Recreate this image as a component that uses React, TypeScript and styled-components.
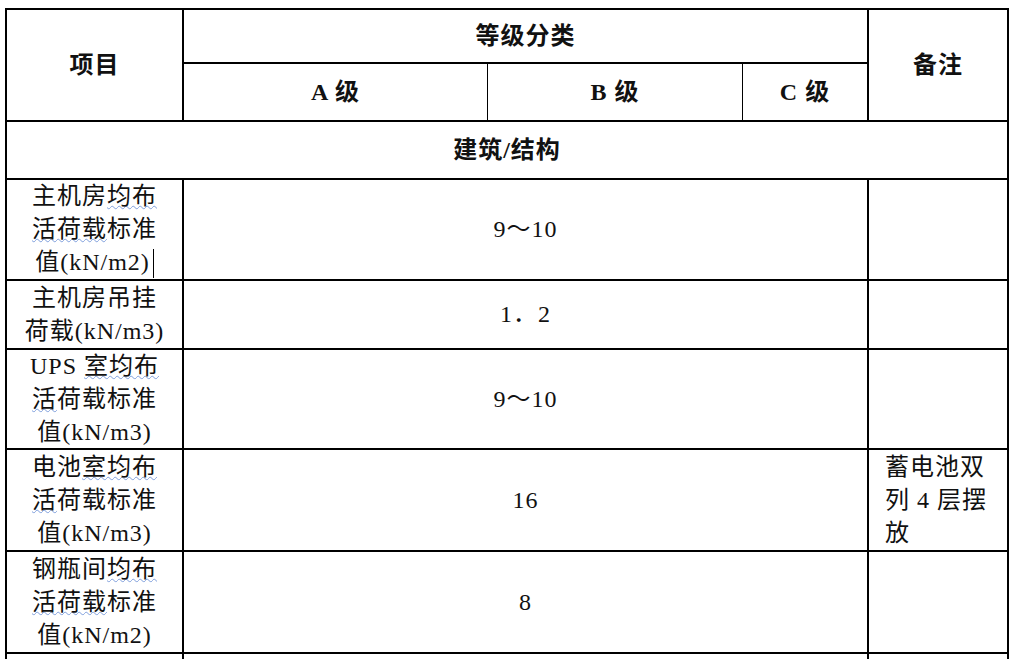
import React from "react";
import styled, { createGlobalStyle } from "styled-components";

const GlobalStyle = createGlobalStyle`
  html, body {
    margin: 0;
    padding: 0;
    background: #ffffff;
  }
  body {
    font-family: "Liberation Serif", "Noto Sans CJK SC", serif;
    color: #111111;
  }
`;

const Page = styled.div`
  box-sizing: border-box;
  height: 659px;
  overflow: hidden;
  padding: 8px 7px 0 5px;
`;

const Grid = styled.div`
  box-sizing: border-box;
  width: 1004px;
  display: grid;
  grid-template-columns: 177px 304px 255px 126px 140px;
  grid-template-rows: 54px 58px 58px 101px 69px 100px 102px 102px 102px;
  border-top: 2px solid #000;
  border-left: 2px solid #000;
`;

const Cell = styled.div<{
  $col: string;
  $row: string;
  $right?: number;
  $align?: "center" | "left";
}>`
  box-sizing: border-box;
  grid-column: ${(p) => p.$col};
  grid-row: ${(p) => p.$row};
  border-right: ${(p) => p.$right ?? 2}px solid #000;
  border-bottom: 2px solid #000;
  display: flex;
  align-items: center;
  justify-content: ${(p) => (p.$align === "left" ? "flex-start" : "center")};
  text-align: ${(p) => p.$align ?? "center"};
  padding: ${(p) => (p.$align === "left" ? "0 0 0 16px" : "0")};
  font-size: 24px;
  line-height: 33px;
  letter-spacing: 1px;
`;

const HeadCell = styled(Cell)`
  font-weight: 700;
`;

const Lines = styled.div`
  display: flex;
  flex-direction: column;
`;

const Line = styled.span`
  display: block;
  white-space: nowrap;
`;

const Squiggle = styled.span`
  text-decoration-line: underline;
  text-decoration-style: wavy;
  text-decoration-color: #7f9fdc;
  text-decoration-thickness: 1px;
  text-underline-offset: 1px;
`;

const Caret = styled.span`
  display: inline-block;
  width: 1px;
  height: 29px;
  margin-left: 3px;
  background: #000;
  vertical-align: -8px;
`;

type Row = {
  label: React.ReactNode[];
  value: string;
  note?: string[];
};

const rows: Row[] = [
  {
    label: [
      <>主机房<Squiggle>均布</Squiggle></>,
      <><Squiggle>活荷载</Squiggle>标准</>,
      <>值(kN/m2)<Caret /></>,
    ],
    value: "9～10",
  },
  {
    label: [<>主机房吊挂</>, <>荷载(kN/m3)</>],
    value: "1．2",
  },
  {
    label: [
      <>UPS <Squiggle>室均布</Squiggle></>,
      <><Squiggle>活</Squiggle>荷载标准</>,
      <>值(kN/m3)</>,
    ],
    value: "9～10",
  },
  {
    label: [
      <>电池<Squiggle>室均布</Squiggle></>,
      <><Squiggle>活</Squiggle>荷载标准</>,
      <>值(kN/m3)</>,
    ],
    value: "16",
    note: ["蓄电池双", "列 4 层摆", "放"],
  },
  {
    label: [
      <>钢瓶间<Squiggle>均布</Squiggle></>,
      <><Squiggle>活荷载</Squiggle>标准</>,
      <>值(kN/m2)</>,
    ],
    value: "8",
  },
];

export default function App() {
  return (
    <>
      <GlobalStyle />
      <Page>
        <Grid>
          <HeadCell $col="1" $row="1 / 3">项目</HeadCell>
          <HeadCell $col="2 / 5" $row="1">等级分类</HeadCell>
          <HeadCell $col="5" $row="1 / 3">备注</HeadCell>
          <HeadCell $col="2" $row="2" $right={1}>A 级</HeadCell>
          <HeadCell $col="3" $row="2" $right={1}>B 级</HeadCell>
          <HeadCell $col="4" $row="2">C 级</HeadCell>
          <HeadCell $col="1 / 6" $row="3">建筑/结构</HeadCell>

          {rows.map((r, i) => {
            const row = String(i + 4);
            return (
              <React.Fragment key={i}>
                <Cell $col="1" $row={row}>
                  <Lines>
                    {r.label.map((l, j) => (
                      <Line key={j}>{l}</Line>
                    ))}
                  </Lines>
                </Cell>
                <Cell $col="2 / 5" $row={row}>{r.value}</Cell>
                <Cell $col="5" $row={row} $align="left">
                  {r.note && (
                    <Lines>
                      {r.note.map((n, j) => (
                        <Line key={j}>{n}</Line>
                      ))}
                    </Lines>
                  )}
                </Cell>
              </React.Fragment>
            );
          })}

          <Cell $col="1" $row="9" />
          <Cell $col="2 / 5" $row="9" />
          <Cell $col="5" $row="9" />
        </Grid>
      </Page>
    </>
  );
}
